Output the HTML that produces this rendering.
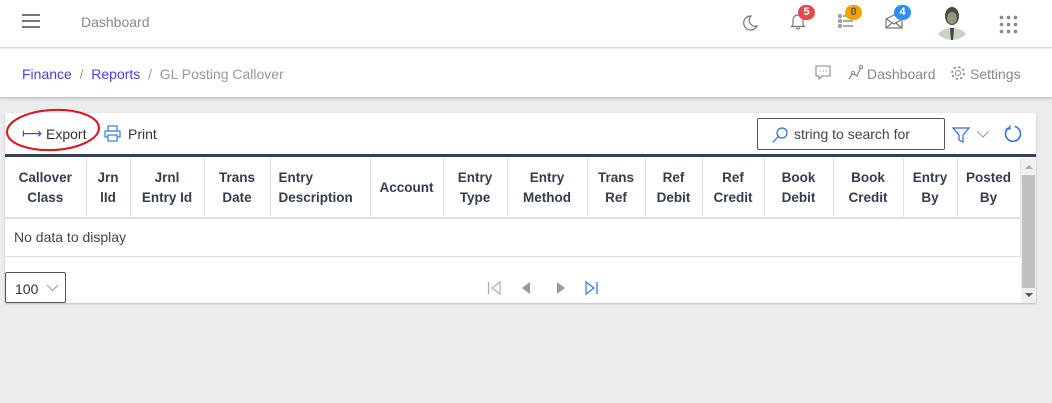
<!DOCTYPE html>
<html><head><meta charset="utf-8"><style>
*{box-sizing:border-box;margin:0;padding:0}
body{width:1052px;height:403px;background:#ebecee;font-family:"Liberation Sans",sans-serif;position:relative;overflow:hidden;color:#333}
.a{position:absolute}
.top{left:0;top:0;width:1052px;height:48px;background:#fff;border-bottom:1px solid #dcdde2}
.bc{left:0;top:49px;width:1052px;height:48px;background:#fff;box-shadow:0 2px 2px #c8c8cc}
.badge{position:absolute;height:15px;min-width:17px;border-radius:8px;color:#fff;font-size:11px;font-weight:bold;text-align:center;line-height:15px}
.card{left:5px;top:113px;width:1031px;height:190px;background:#fff;box-shadow:0 1px 2px #bbb}
th{font-size:13.5px;font-weight:bold;color:#353d4d;line-height:20px;border-right:1px solid #dde0e5;border-bottom:2px solid #dde0e5;padding:0 3px;height:60px;vertical-align:middle}
table{border-collapse:collapse;position:absolute;left:0;top:45px;width:1015px;table-layout:fixed}
</style></head><body>
<div class="a top">
 <div class="a" style="left:22px;top:14px;width:18px;height:2px;background:#777;box-shadow:0 6px 0 #777,0 12px 0 #777"></div>
 <div class="a" style="left:81px;top:14px;font-size:14px;color:#888">Dashboard</div>
 <svg class="a" style="left:740px;top:13px" width="20" height="20" viewBox="0 0 20 20"><path d="M11 3a7 7 0 1 0 6 10a6 6 0 0 1-6-10z" fill="none" stroke="#777" stroke-width="1.2"/></svg>
 <svg class="a" style="left:790px;top:12px" width="16" height="18" viewBox="0 0 16 18"><path d="M3 13V8a5 5 0 0 1 10 0v5l1.5 1.5h-13zM6.5 15.5a1.5 1.5 0 0 0 3 0" fill="none" stroke="#777" stroke-width="1.2"/></svg>
 <div class="badge" style="left:798px;top:5px;background:#e04b4b">5</div>
 <svg class="a" style="left:838px;top:13px" width="16" height="16" viewBox="0 0 16 16"><g fill="none" stroke="#777" stroke-width="1.2"><circle cx="2" cy="3" r="1.3"/><circle cx="2" cy="8" r="1.3"/><circle cx="2" cy="13" r="1.3"/><path d="M5 3h10M5 8h10M5 13h10"/></g></svg>
 <div class="badge" style="left:845px;top:5px;background:#f0a500;color:#555">0</div>
 <svg class="a" style="left:885px;top:14px" width="18" height="15" viewBox="0 0 18 15"><path d="M1 5l8-4 8 4v9H1zM1 5l8 5 8-5M1 14l6-5M17 14l-6-5" fill="none" stroke="#777" stroke-width="1.2"/></svg>
 <div class="badge" style="left:894px;top:5px;background:#2d8ef0">4</div>
 <svg class="a" style="left:934px;top:2px" width="36" height="38" viewBox="0 0 36 38"><defs><clipPath id="c"><circle cx="18" cy="18" r="20"/></clipPath></defs><rect width="36" height="38" fill="#fff"/><g clip-path="url(#c)"><path d="M2 38q2-12 16-12q14 0 16 12z" fill="#c9d4c2"/><path d="M16 26h4l-1 12h-2z" fill="#444"/><ellipse cx="18" cy="14" rx="7" ry="9" fill="#4a4a40"/><ellipse cx="18" cy="16" rx="5" ry="6" fill="#8c9a80"/></g></svg>
 <div class="a" style="left:998px;top:14px;width:20px;height:20px;background:radial-gradient(circle,#888 1.5px,transparent 2.2px) 0 0/7px 7px"></div>
</div>
<div class="a bc">
 <div class="a" style="left:22px;top:17px;font-size:14px;color:#999"><span style="color:#4b3fe0">Finance</span> &nbsp;/&nbsp; <span style="color:#4b3fe0">Reports</span> &nbsp;/&nbsp; GL Posting Callover</div>
 <svg class="a" style="left:815px;top:16px" width="16" height="15" viewBox="0 0 16 15"><path d="M1 1h14v10H7l-3 3v-3H1z" fill="none" stroke="#888" stroke-width="1.1"/><path d="M5 6h1M8 6h1M11 6h1" stroke="#888"/></svg>
 <svg class="a" style="left:847px;top:16px" width="16" height="16" viewBox="0 0 16 16"><path d="M2 14l4-6 4 3 4-9" fill="none" stroke="#888" stroke-width="1.2"/><circle cx="6" cy="8" r="1.5" fill="#fff" stroke="#888"/><circle cx="14" cy="2" r="1.5" fill="#fff" stroke="#888"/></svg>
 <div class="a" style="left:867px;top:17px;font-size:14px;color:#888">Dashboard</div>
 <svg class="a" style="left:950px;top:16px" width="16" height="16" viewBox="0 0 16 16"><circle cx="8" cy="8" r="2.5" fill="none" stroke="#888"/><circle cx="8" cy="8" r="6" fill="none" stroke="#888" stroke-width="1.6" stroke-dasharray="2.4 2.3"/></svg>
 <div class="a" style="left:970px;top:17px;font-size:14px;color:#888">Settings</div>
</div>
<div class="a card">
 <div class="a" style="left:17px;top:12px;font-size:14px;color:#4b3fe0">⟼</div>
 <div class="a" style="left:41px;top:13px;font-size:14px;color:#333">Export</div>
 <svg class="a" style="left:0;top:-5px" width="100" height="50"><ellipse cx="48" cy="22" rx="46" ry="20" fill="none" stroke="#e0101a" stroke-width="2" transform="rotate(-3 48 22)"/></svg>
 <svg class="a" style="left:99px;top:12px" width="17" height="17" viewBox="0 0 17 17"><g fill="none" stroke="#2a6fd6" stroke-width="1.1"><rect x="4" y="1" width="9" height="5"/><rect x="1" y="6" width="15" height="6"/><rect x="4" y="10" width="9" height="6" fill="#fff"/></g></svg>
 <div class="a" style="left:123px;top:13px;font-size:14px;color:#333">Print</div>
 <div class="a" style="left:752px;top:5px;width:188px;height:32px;border:1px solid #555;border-radius:2px"></div>
 <svg class="a" style="left:766px;top:13px" width="18" height="18" viewBox="0 0 18 18"><circle cx="11" cy="7" r="5" fill="none" stroke="#2a6fd6" stroke-width="1.2"/><path d="M7.5 10.5L1.5 16.5" stroke="#2a6fd6" stroke-width="1.2"/></svg>
 <div class="a" style="left:789px;top:13px;font-size:14px;color:#444">string to search for</div>
 <svg class="a" style="left:947px;top:13px" width="18" height="18" viewBox="0 0 18 18"><path d="M1 2h16l-6 7v7l-4-2V9z" fill="none" stroke="#2a6fd6" stroke-width="1.2"/></svg>
 <svg class="a" style="left:971px;top:16px" width="14" height="10"><path d="M1 2l6 6 6-6" fill="none" stroke="#99a" stroke-width="1.1"/></svg>
 <svg class="a" style="left:998px;top:11px" width="20" height="20" viewBox="0 0 20 20"><path d="M6 3.5A7.5 7.5 0 1 0 12 2.6" fill="none" stroke="#2a6fd6" stroke-width="1.5"/><path d="M6 1v4h-4" fill="none" stroke="#2a6fd6" stroke-width="1.2" transform="translate(1 0)"/></svg>
 <div class="a" style="left:0;top:41px;width:1031px;height:3px;background:#354157"></div>
 <table>
  <colgroup><col style="width:81px"><col style="width:44px"><col style="width:74px"><col style="width:66px"><col style="width:100px"><col style="width:73px"><col style="width:64px"><col style="width:80px"><col style="width:58px"><col style="width:57px"><col style="width:62px"><col style="width:69px"><col style="width:70px"><col style="width:54px"><col style="width:63px"></colgroup>
  <tr><th>Callover<br>Class</th><th>Jrn<br>lId</th><th>Jrnl<br>Entry Id</th><th>Trans<br>Date</th><th style="text-align:left;padding-left:8px">Entry<br>Description</th><th>Account</th><th>Entry<br>Type</th><th>Entry<br>Method</th><th>Trans<br>Ref</th><th>Ref<br>Debit</th><th>Ref<br>Credit</th><th>Book<br>Debit</th><th>Book<br>Credit</th><th>Entry<br>By</th><th>Posted<br>By</th></tr>
  <tr><td colspan="15" style="height:38px;border-bottom:1px solid #dde0e5;border-right:1px solid #dde0e5;font-size:14px;color:#444;padding-left:9px">No data to display</td></tr>
 </table>
 <div class="a" style="left:1016px;top:45px;width:15px;height:145px;background:#f0f0f0"></div>
 <div class="a" style="left:1017px;top:62px;width:13px;height:113px;background:#c1c1c1"></div>
 <div class="a" style="left:1020px;top:52px;border:4px solid transparent;border-bottom:4px solid #aaa;border-top:0"></div>
 <div class="a" style="left:1020px;top:180px;border:4px solid transparent;border-top:4px solid #555;border-bottom:0"></div>
 <div class="a" style="left:0;top:159px;width:61px;height:31px;border:1px solid #555;border-radius:2px;font-size:14px;padding:8px 0 0 9px;color:#333">100</div>
 <svg class="a" style="left:41px;top:171px" width="13" height="8"><path d="M1 1l5.5 5.5L12 1" fill="none" stroke="#99a"/></svg>
 <svg class="a" style="left:482px;top:167px" width="120" height="16"><path d="M1.5 2v12" stroke="#aaa" stroke-width="1.2"/><path d="M13 2v12L5 8z" fill="none" stroke="#aaa" stroke-width="1.1"/><path d="M43 2v12L35 8z" fill="#999"/><path d="M70 2v12L78 8z" fill="#999"/><path d="M99 2v12L107 8z" fill="none" stroke="#2a6fd6" stroke-width="1.1"/><path d="M110 2v12" stroke="#2a6fd6" stroke-width="1.2"/></svg>
</div>
</body></html>
